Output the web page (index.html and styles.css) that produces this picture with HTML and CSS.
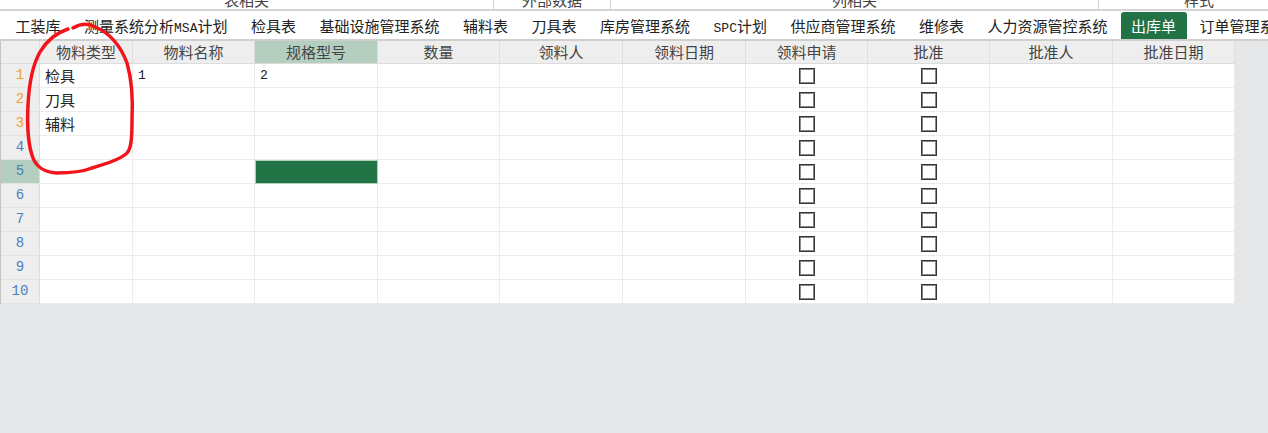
FILE: index.html
```html
<!DOCTYPE html>
<html lang="zh-CN">
<head>
    <meta charset="UTF-8">
    <meta name="viewport" content="width=device-width, initial-scale=1.0">
    <title>出库单</title>
    <link rel="stylesheet" href="styles.css">
</head>
<body>

    <!-- Grupos da faixa superior (cortados) -->
    <div class="grupos">
        <div class="grupo g1"><span>表相关</span></div>
        <div class="grupo g2"><span>外部数据</span></div>
        <div class="grupo g3"><span>列相关</span></div>
        <div class="grupo g4"><span>样式</span></div>
    </div>

    <!-- Abas -->
    <div class="abas">
        <div class="aba">工装库</div>
        <div class="aba">测量系统分析<span class="mono">MSA</span>计划</div>
        <div class="aba">检具表</div>
        <div class="aba">基础设施管理系统</div>
        <div class="aba">辅料表</div>
        <div class="aba">刀具表</div>
        <div class="aba">库房管理系统</div>
        <div class="aba"><span class="mono">SPC</span>计划</div>
        <div class="aba">供应商管理系统</div>
        <div class="aba">维修表</div>
        <div class="aba">人力资源管控系统</div>
        <div class="aba ativa">出库单</div>
        <div class="aba">订单管理系统</div>
    </div>

    <!-- Planilha -->
    <div class="planilha">
        <div class="linha cabecalho">
            <div class="cel num"></div>
            <div class="cel">物料类型</div>
            <div class="cel">物料名称</div>
            <div class="cel sel-cab">规格型号</div>
            <div class="cel">数量</div>
            <div class="cel">领料人</div>
            <div class="cel">领料日期</div>
            <div class="cel">领料申请</div>
            <div class="cel">批准</div>
            <div class="cel">批准人</div>
            <div class="cel">批准日期</div>
        </div>

        <div class="linha">
            <div class="cel num laranja">1</div>
            <div class="cel">检具</div>
            <div class="cel mono">1</div>
            <div class="cel mono">2</div>
            <div class="cel"></div><div class="cel"></div><div class="cel"></div>
            <div class="cel centro"><span class="caixa"></span></div>
            <div class="cel centro"><span class="caixa"></span></div>
            <div class="cel"></div><div class="cel"></div>
        </div>
        <div class="linha">
            <div class="cel num laranja">2</div>
            <div class="cel">刀具</div>
            <div class="cel"></div><div class="cel"></div>
            <div class="cel"></div><div class="cel"></div><div class="cel"></div>
            <div class="cel centro"><span class="caixa"></span></div>
            <div class="cel centro"><span class="caixa"></span></div>
            <div class="cel"></div><div class="cel"></div>
        </div>
        <div class="linha">
            <div class="cel num laranja">3</div>
            <div class="cel">辅料</div>
            <div class="cel"></div><div class="cel"></div>
            <div class="cel"></div><div class="cel"></div><div class="cel"></div>
            <div class="cel centro"><span class="caixa"></span></div>
            <div class="cel centro"><span class="caixa"></span></div>
            <div class="cel"></div><div class="cel"></div>
        </div>
        <div class="linha">
            <div class="cel num">4</div>
            <div class="cel"></div><div class="cel"></div><div class="cel"></div>
            <div class="cel"></div><div class="cel"></div><div class="cel"></div>
            <div class="cel centro"><span class="caixa"></span></div>
            <div class="cel centro"><span class="caixa"></span></div>
            <div class="cel"></div><div class="cel"></div>
        </div>
        <div class="linha">
            <div class="cel num sel-num">5</div>
            <div class="cel"></div><div class="cel"></div>
            <div class="cel selecionada"></div>
            <div class="cel"></div><div class="cel"></div><div class="cel"></div>
            <div class="cel centro"><span class="caixa"></span></div>
            <div class="cel centro"><span class="caixa"></span></div>
            <div class="cel"></div><div class="cel"></div>
        </div>
        <div class="linha">
            <div class="cel num">6</div>
            <div class="cel"></div><div class="cel"></div><div class="cel"></div>
            <div class="cel"></div><div class="cel"></div><div class="cel"></div>
            <div class="cel centro"><span class="caixa"></span></div>
            <div class="cel centro"><span class="caixa"></span></div>
            <div class="cel"></div><div class="cel"></div>
        </div>
        <div class="linha">
            <div class="cel num">7</div>
            <div class="cel"></div><div class="cel"></div><div class="cel"></div>
            <div class="cel"></div><div class="cel"></div><div class="cel"></div>
            <div class="cel centro"><span class="caixa"></span></div>
            <div class="cel centro"><span class="caixa"></span></div>
            <div class="cel"></div><div class="cel"></div>
        </div>
        <div class="linha">
            <div class="cel num">8</div>
            <div class="cel"></div><div class="cel"></div><div class="cel"></div>
            <div class="cel"></div><div class="cel"></div><div class="cel"></div>
            <div class="cel centro"><span class="caixa"></span></div>
            <div class="cel centro"><span class="caixa"></span></div>
            <div class="cel"></div><div class="cel"></div>
        </div>
        <div class="linha">
            <div class="cel num">9</div>
            <div class="cel"></div><div class="cel"></div><div class="cel"></div>
            <div class="cel"></div><div class="cel"></div><div class="cel"></div>
            <div class="cel centro"><span class="caixa"></span></div>
            <div class="cel centro"><span class="caixa"></span></div>
            <div class="cel"></div><div class="cel"></div>
        </div>
        <div class="linha">
            <div class="cel num">10</div>
            <div class="cel"></div><div class="cel"></div><div class="cel"></div>
            <div class="cel"></div><div class="cel"></div><div class="cel"></div>
            <div class="cel centro"><span class="caixa"></span></div>
            <div class="cel centro"><span class="caixa"></span></div>
            <div class="cel"></div><div class="cel"></div>
        </div>
    </div>

    <!-- Marcação vermelha à mão -->
    <svg class="marcacao" width="1268" height="433" viewBox="0 0 1268 433">
        <path d="M73 28 C80 24 88 23 95 27 C110 33 121 47 127 63 C132 80 133 100 132 120 C132 140 131 150 126 154 C116 162 104 164 92 168 C82 172 70 173 56 173 C44 172 36 166 33 158 C28 145 27 125 28 105 C29 85 32 66 40 52 C47 40 56 33 68 29"
              fill="none" stroke="#f2141b" stroke-width="3.5" stroke-linecap="round" stroke-linejoin="round"/>
    </svg>

</body>
</html>
```

FILE: styles.css
```css
/* Estilos gerais */
body {
    margin: 0;
    background-color: #e6e7e9;
    font-family: "Noto Sans CJK SC", "Noto Sans", sans-serif;
    font-size: 15px;
    color: #222;
    height: 433px;
    overflow: hidden;
    position: relative;
}

.mono {
    font-family: "Liberation Mono", "Noto Sans CJK SC", monospace;
    font-size: 13px;
}

/* Faixa dos grupos (cortada no topo) */
.grupos {
    display: flex;
    height: 9px;
    overflow: hidden;
    background-color: #fff;
    border-bottom: 2px solid #d4d4d4;
}

.grupo {
    flex-shrink: 0;
    text-align: center;
    color: #444;
    border-right: 1px solid #d0d0d0;
    box-sizing: border-box;
}

.grupo span {
    display: block;
    line-height: 15px;
    margin-top: -8px;
}

.g1 { width: 494px; }
.g2 { width: 117px; }
.g3 { width: 488px; }
.g4 { width: 200px; border-right: none; }

/* Abas */
.abas {
    display: flex;
    align-items: flex-end;
    gap: 2.5px;
    height: 28px;
    padding-left: 5px;
    background-color: #fff;
    border-bottom: 2px solid #cfcfcf;
    white-space: nowrap;
    overflow: hidden;
}

.aba {
    flex-shrink: 0;
    padding: 0 10.5px;
    height: 27px;
    line-height: 27px;
    color: #222;
}

.aba.ativa {
    background-color: #217346;
    color: #fff;
    border-radius: 3px 3px 0 0;
}

/* Planilha */
.planilha {
    width: 1235px;
    background-color: #fff;
    border-left: 1px solid #c4c4c4;
    box-sizing: border-box;
}

.linha {
    display: grid;
    grid-template-columns: 39px 93px 122px 123px 122px 123px 123px 122px 122px 123px 122px;
    height: 24px;
}

.cel {
    box-sizing: border-box;
    border-right: 1px solid #ececec;
    border-bottom: 1px solid #ececec;
    padding-left: 5px;
    line-height: 23px;
    white-space: nowrap;
    overflow: hidden;
}

.cabecalho {
    height: 23px;
    background-color: #eeeeee;
}

.cabecalho .cel {
    text-align: center;
    padding-left: 0;
    color: #444;
    line-height: 22px;
    border-right-color: #dedede;
    border-bottom-color: #dcdcdc;
}

.cabecalho .sel-cab {
    background-color: #b4cfbf;
}

.num {
    background-color: #eeeeee;
    text-align: center;
    padding-left: 0;
    color: #4a7fc0;
    font-family: "Liberation Mono", monospace;
    font-size: 14px;
    border-right-color: #dcdcdc;
    border-bottom-color: #e2e2e2;
}

.num.laranja {
    color: #f0a028;
}

.num.sel-num {
    background-color: #b4cfbf;
}

.selecionada {
    background-color: #217346;
    border: 1px solid #b4cfbf;
}

/* Caixas de seleção */
.centro {
    display: flex;
    justify-content: center;
    align-items: center;
    padding-left: 0;
}

.caixa {
    width: 16px;
    height: 16px;
    box-sizing: border-box;
    border: 1px solid #333;
    box-shadow: inset 0 0 0 1px #8a8a8a;
    background-color: #fff;
}

/* Marcação por cima de tudo */
.marcacao {
    position: absolute;
    left: 0;
    top: 0;
    pointer-events: none;
}
```
